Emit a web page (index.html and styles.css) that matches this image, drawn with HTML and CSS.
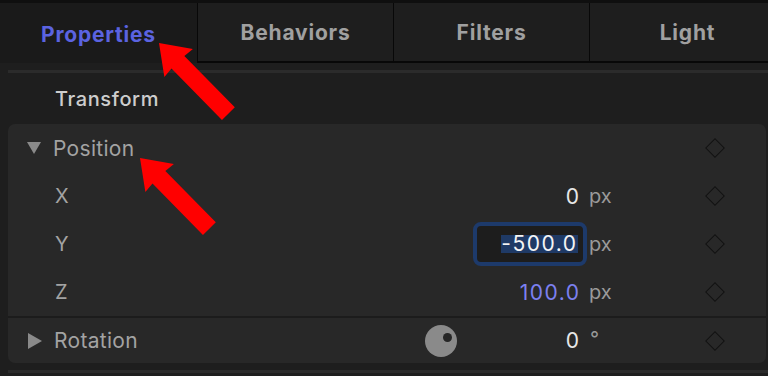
FILE: index.html
```html
<!DOCTYPE html>
<html lang="en">
<head>
    <meta charset="UTF-8">
    <meta name="viewport" content="width=device-width, initial-scale=1.0">
    <title>Inspector - Properties</title>
    <link rel="stylesheet" href="styles.css">
</head>
<body>
    <div class="inspector">
        <div class="tabs">
            <div class="tab active">Properties</div>
            <div class="tab">Behaviors</div>
            <div class="tab">Filters</div>
            <div class="tab">Light</div>
        </div>
        <div class="strip"></div>
        <div class="section-title">Transform</div>

        <div class="group">
            <div class="row">
                <span class="disclosure open"></span>
                <span class="label group-label">Position</span>
                <span class="keyframe"></span>
            </div>
            <div class="row">
                <span class="label sub">X</span>
                <span class="value">0</span>
                <span class="unit">px</span>
                <span class="keyframe"></span>
            </div>
            <div class="row">
                <span class="label sub">Y</span>
                <span class="value">
                    <span class="field"><span class="selected">-500.0</span></span>
                </span>
                <span class="unit">px</span>
                <span class="keyframe"></span>
            </div>
            <div class="row">
                <span class="label sub">Z</span>
                <span class="value changed">100.0</span>
                <span class="unit">px</span>
                <span class="keyframe"></span>
            </div>
            <div class="divider"></div>
            <div class="row last">
                <span class="disclosure"></span>
                <span class="label group-label">Rotation</span>
                <span class="dial"><span class="dial-dot"></span></span>
                <span class="value">0</span>
                <span class="unit deg">°</span>
                <span class="keyframe"></span>
            </div>
        </div>
        <div class="strip bottom"></div>
    </div>

    <!-- callout arrows drawn over the panel -->
    <svg class="arrows" width="768" height="376" viewBox="0 0 768 376">
        <g fill="#ff0000">
            <polygon transform="translate(159 43) rotate(45.5)" points="0,0 28,-20 27,-9 99,-9 99,9 27,9 28,20"/>
            <polygon transform="translate(140 158) rotate(45.5)" points="0,0 28,-20 27,-9 99,-9 99,9 27,9 28,20"/>
        </g>
    </svg>
</body>
</html>
```

FILE: styles.css
```css
body {
    margin: 0;
    background-color: #1e1e1e;
    font-family: 'Inter', 'Noto Sans', sans-serif;
    overflow: hidden;
}

.inspector {
    width: 768px;
    height: 376px;
    border-top: 3px solid #0f0f0f;
    box-sizing: border-box;
}

.tabs {
    display: flex;
    height: 60px;
}

.tab {
    flex: 0 0 196px;
    display: flex;
    align-items: center;
    justify-content: center;
    background-color: #1e1e1e;
    border-left: 1px solid #080808;
    border-bottom: 2px solid #080808;
    color: #a0a0a0;
    font-size: 21px;
    font-weight: 700;
    letter-spacing: 0.8px;
    box-sizing: border-box;
}

.tab.active {
    flex-basis: 197px;
    border: none;
    background-color: #1a1a1a;
    color: #5b63e0;
    padding-top: 2px;
}

.strip {
    height: 3px;
    margin: 7px 0 0 8px;
    background-color: #2b2b2b;
}

.strip.bottom {
    margin-top: 7px;
}

.section-title {
    height: 51px;
    display: flex;
    align-items: center;
    padding-left: 55px;
    color: #cdcdcd;
    font-size: 20px;
    font-weight: 500;
    letter-spacing: 0.6px;
}

.group {
    margin-left: 8px;
    width: 758px;
    background-color: #282828;
    border-radius: 7px;
}

.row {
    height: 48px;
    display: flex;
    align-items: center;
    padding-right: 33px;
}

.row.last {
    height: 45px;
}

.divider {
    height: 2px;
    background-color: #1c1c1c;
}

.disclosure {
    width: 0;
    height: 0;
    margin-left: 19px;
    margin-right: 12px;
}

.disclosure.open {
    border-left: 7.5px solid transparent;
    border-right: 7.5px solid transparent;
    border-top: 12px solid #8a8a8a;
}

.disclosure:not(.open) {
    margin-left: 20px;
    margin-right: 12px;
    border-top: 8px solid transparent;
    border-bottom: 8px solid transparent;
    border-left: 14px solid #8a8a8a;
}

.label {
    flex: 1;
    color: #a3a3a3;
    font-size: 21px;
    letter-spacing: 0.3px;
}

.label.sub {
    padding-left: 47px;
    font-size: 20px;
}

.value {
    width: 120px;
    display: flex;
    justify-content: flex-end;
    color: #e8e8e8;
    font-size: 21px;
    letter-spacing: 1.5px;
    margin-right: -1.5px;
}

.value.changed {
    color: #7c80f0;
}

.field {
    display: flex;
    align-items: center;
    justify-content: flex-end;
    width: 114px;
    height: 44px;
    margin-right: -6px;
    padding-right: 5px;
    border: 4px solid #1d3a6b;
    border-radius: 8px;
    background-color: #1d1d1d;
    box-sizing: border-box;
}

.selected {
    background-color: #1f3a66;
    color: #f4f4f4;
    line-height: 18px;
}

.unit {
    width: 118px;
    padding-left: 10px;
    color: #9a9a9a;
    font-size: 20px;
    box-sizing: border-box;
}

.unit.deg {
    align-self: flex-start;
    padding-top: 9px;
    padding-left: 11px;
    height: 30px;
}

.keyframe {
    width: 36px;
    height: 36px;
    position: relative;
    margin-left: auto;
}

.keyframe::after {
    content: '';
    position: absolute;
    left: 11px;
    top: 11px;
    width: 12px;
    height: 12px;
    border: 1.5px solid #121212;
    transform: rotate(45deg);
}

.dial {
    width: 32px;
    height: 32px;
    border-radius: 50%;
    background-color: #8a8a8a;
    margin-right: 4px;
    position: relative;
}

.dial-dot {
    position: absolute;
    left: 18px;
    top: 8px;
    width: 9px;
    height: 9px;
    border-radius: 50%;
    background-color: #262626;
}

.arrows {
    position: absolute;
    left: 0;
    top: 0;
    pointer-events: none;
}
```
